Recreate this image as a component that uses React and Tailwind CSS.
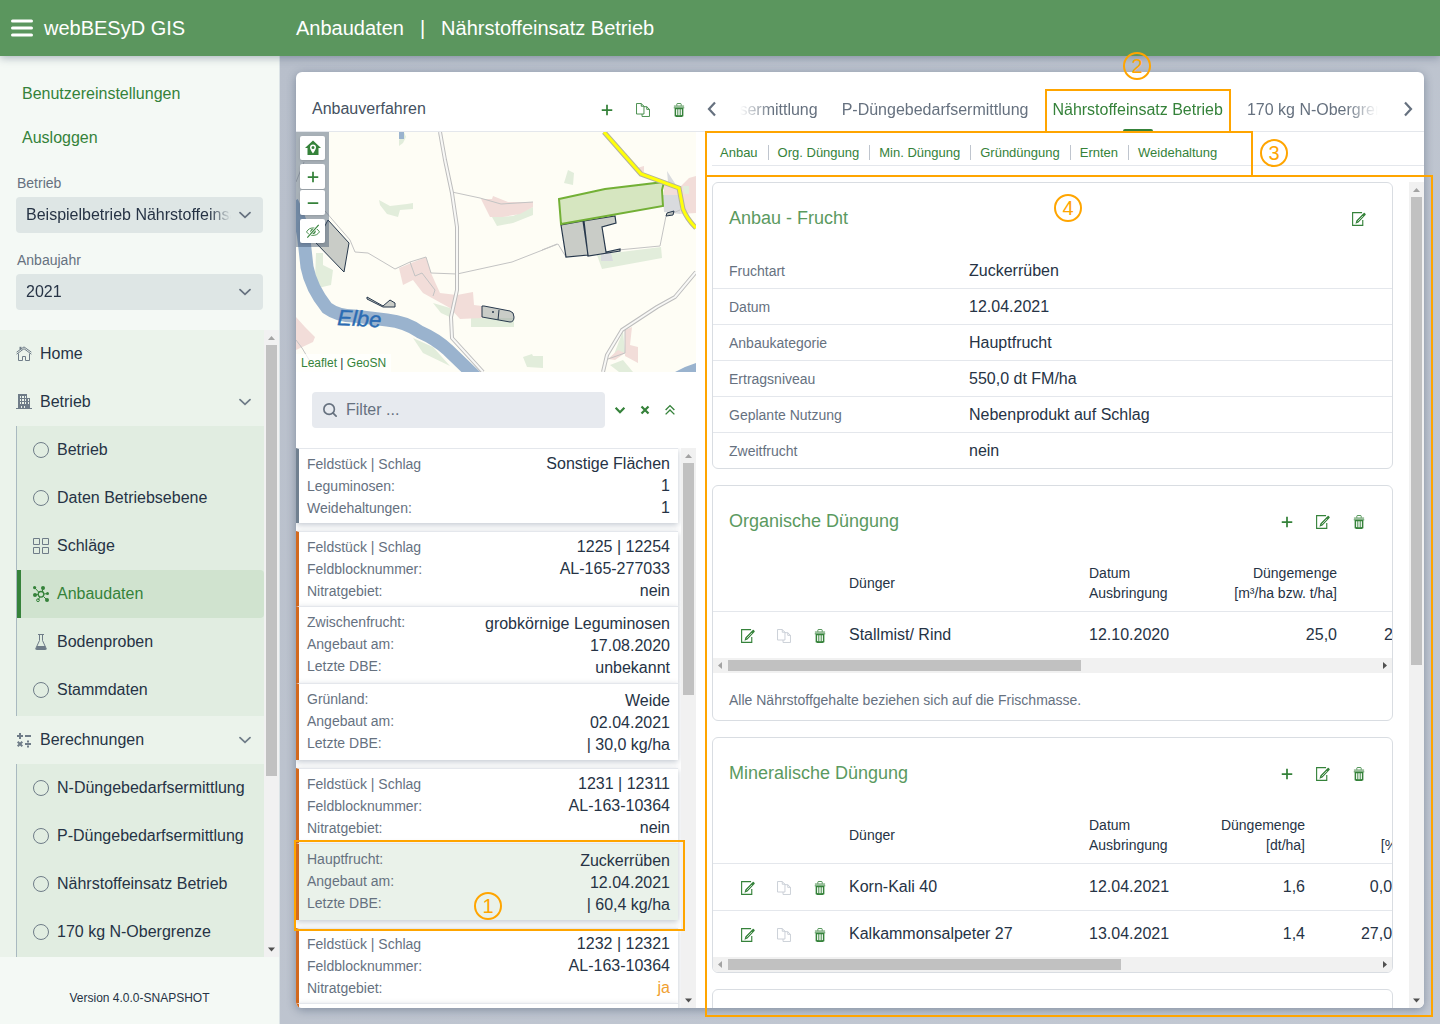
import { useEffect, useRef } from 'react'
import clsx from 'clsx'

const menu = [
  { label: 'Home', icon: 'home' },
  {
    label: 'Betrieb',
    icon: 'building',
    children: [
      { label: 'Betrieb', icon: 'circle' },
      { label: 'Daten Betriebsebene', icon: 'circle' },
      { label: 'Schläge', icon: 'grid' },
      { label: 'Anbaudaten', icon: 'cluster', active: true },
      { label: 'Bodenproben', icon: 'flask' },
      { label: 'Stammdaten', icon: 'circle' },
    ],
  },
  {
    label: 'Berechnungen',
    icon: 'calc',
    children: [
      { label: 'N-Düngebedarfsermittlung', icon: 'circle' },
      { label: 'P-Düngebedarfsermittlung', icon: 'circle' },
      { label: 'Nährstoffeinsatz Betrieb', icon: 'circle' },
      { label: '170 kg N-Obergrenze', icon: 'circle' },
    ],
  },
]

const fields = [
  {
    color: 'border-l-[#708090]',
    head: [['Feldstück | Schlag', 'Sonstige Flächen'], ['Leguminosen:', '1'], ['Weidehaltungen:', '1']],
    crops: [],
  },
  {
    color: 'border-l-[#d2691e]',
    head: [['Feldstück | Schlag', '1225 | 12254'], ['Feldblocknummer:', 'AL-165-277033'], ['Nitratgebiet:', 'nein']],
    crops: [
      { rows: [['Zwischenfrucht:', 'grobkörnige Leguminosen'], ['Angebaut am:', '17.08.2020'], ['Letzte DBE:', 'unbekannt']] },
      { rows: [['Grünland:', 'Weide'], ['Angebaut am:', '02.04.2021'], ['Letzte DBE:', '| 30,0 kg/ha']] },
    ],
  },
  {
    color: 'border-l-[#d2691e]',
    head: [['Feldstück | Schlag', '1231 | 12311'], ['Feldblocknummer:', 'AL-163-10364'], ['Nitratgebiet:', 'nein']],
    crops: [
      { selected: true, rows: [['Hauptfrucht:', 'Zuckerrüben'], ['Angebaut am:', '12.04.2021'], ['Letzte DBE:', '| 60,4 kg/ha']] },
    ],
  },
  {
    color: 'border-l-[#d2691e]',
    head: [['Feldstück | Schlag', '1232 | 12321'], ['Feldblocknummer:', 'AL-163-10364'], ['Nitratgebiet:', 'ja']],
    crops: [{ rows: [] }],
  },
]

const tabs = ['N-Düngebedarfsermittlung', 'P-Düngebedarfsermittlung', 'Nährstoffeinsatz Betrieb', '170 kg N-Obergrenze']

const anchors = ['Anbau', 'Org. Düngung', 'Min. Düngung', 'Gründüngung', 'Ernten', 'Weidehaltung']

const crop = [
  ['Fruchtart', 'Zuckerrüben'],
  ['Datum', '12.04.2021'],
  ['Anbaukategorie', 'Hauptfrucht'],
  ['Ertragsniveau', '550,0 dt FM/ha'],
  ['Geplante Nutzung', 'Nebenprodukt auf Schlag'],
  ['Zweitfrucht', 'nein'],
]

const icons = {
  home: (
    <g fill="none" stroke="currentColor">
      <path d="M.6 8.200 8 2.700l7.400 5.500M.6 6.200 8 .9l7.400 5.300" />
      <path d="M2.500 7.500v7h4v-4h3v4h4v-7" />
      <path d="M4.500 3.600V.8" strokeWidth="2" />
    </g>
  ),
  building: (
    <path
      fillRule="evenodd"
      d="M2 0h9v4h3v10h2v1H0v-1h2zM4 2v2h1V2zm2 0v2h2V2zm3 0v2h1V2zM4 5v2h1V5zm2 0v2h2V5zm3 0v2h1V5zM4 8v2h1V8zm2 0v2h2V8zm3 0v2h1V8zm-4 4v2h1v-2zm3 0v2h1v-2zm4-7v2h1V5zm0 3v2h1V8z"
    />
  ),
  circle: <circle cx="8" cy="8" r="7.500" fill="none" stroke="currentColor" />,
  grid: <path d="M.5.5h6v6h-6zm9 0h6v6h-6zm-9 9h6v6h-6zm9 0h6v6h-6z" fill="none" stroke="currentColor" />,
  cluster: (
    <g>
      <path d="m2 2 4 4.500M10.200 2.500 9 6M14.500 7.500 11 8M1.800 9l4-.600M5 14l2-3M14 14l-3.500-3.500" stroke="currentColor" />
      <circle cx="8" cy="8.300" r="2.800" fill="none" stroke="currentColor" strokeWidth="1.300" />
      <circle cx="1.600" cy="1.600" r="1.600" />
      <circle cx="10" cy="2" r="2" />
      <circle cx="14.500" cy="7.500" r="1.500" />
      <circle cx="2" cy="9" r="2" />
      <circle cx="14" cy="14" r="2" />
      <circle cx="5" cy="14.200" r="1.400" fill="none" stroke="currentColor" />
    </g>
  ),
  flask: (
    <g>
      <path d="M5 .5h6M6.500 1v5.500l-3.700 8a.7.7 0 0 0 .7 1h9a.7.700 0 0 0 .7-1l-3.700-8V1" fill="none" stroke="currentColor" />
      <path d="M4 12h8l1.500 3.500h-11z" />
    </g>
  ),
  calc: (
    <g stroke="currentColor" strokeWidth="2">
      <path d="M1 4h6M4 1v6M9 4h6M9 12h6" />
      <path d="m1.700 9.700 4.600 4.600M6.300 9.700l-4.600 4.600" />
      <path d="M12 8.500v2M12 13.500v2" />
    </g>
  ),
  plus: <path d="M14 7H9V2H7v5H2v2h5v5h2V9h5z" />,
  minus: <path d="M2 7h12v2H2z" />,
  copy: (
    <path
      d="M.6.6h5.400l3.100 3.100v8.900H.6zM6 .6v3.100h3.100M9.100 4.200h3.200l3.100 3.100v8.100H6.900v-2.800M12.300 4.200v3.100h3.100"
      fill="none"
      stroke="currentColor"
    />
  ),
  trash: (
    <g>
      <path d="M2.200 2.500h11.600v2.700H2.200z" opacity=".5" />
      <path d="M5.500 3V1.500a1 1 0 0 1 1-1h3a1 1 0 0 1 1 1V3" fill="none" stroke="currentColor" />
      <path
        fillRule="evenodd"
        d="M2 5h12v1h-1v9c-1.300.700-2.700 1-4.200 1H7.200c-1.500 0-3-.400-4.200-1V6H2zm2.700 2v6.800l1.400.1V7zm2.500 0v7h1.600V7zm2.700 0v6.900l1.400-.2V7z"
      />
    </g>
  ),
  edit: (
    <g>
      <path d="M11.500.7H.7v14.600h11.600V9" fill="none" stroke="currentColor" strokeWidth="1.300" />
      <path d="M4 13.500 5 9.800l7.800-8 .5-.5c.6-.6 1.200-.3 1.800.3s.9 1.200.3 1.800l-8 8.500z" />
      <path d="m6.500 10.700 6-6.200" stroke="white" strokeWidth=".8" />
    </g>
  ),
  search: (
    <g fill="none" stroke="currentColor" strokeWidth="1.900">
      <circle cx="7" cy="7" r="6" />
      <path d="m11.500 11.500 3.500 3.500" strokeLinecap="round" />
    </g>
  ),
  down: <path d="m3 5.500 5 5 5-5" fill="none" stroke="currentColor" strokeWidth="2.600" />,
  close: <path d="m4 4 8 8M12 4l-8 8" fill="none" stroke="currentColor" strokeWidth="2.600" />,
  doubleUp: <path d="m3 8 5-5 5 5M3 13l5-5 5 5" fill="none" stroke="currentColor" strokeWidth="1.600" />,
  chevron: <path d="m3 5.700 5 4.600 5-4.600" fill="none" stroke="currentColor" strokeWidth="1.800" strokeLinecap="round" />,
  prev: <path d="m11 1.500-6 6.500 6 6.500" fill="none" stroke="currentColor" strokeWidth="2.200" />,
  next: <path d="m5 1.500 6 6.500-6 6.500" fill="none" stroke="currentColor" strokeWidth="2.200" />,
  mapHome: (
    <path
      fillRule="evenodd"
      d="M8 .5 16 8h-2.500v7h-11V8H0zM8 4.500a3 3 0 0 0-3 3C5 9.500 8 13.500 8 13.500s3-4 3-6a3 3 0 0 0-3-3zM8 6a1.500 1.500 0 1 1 0 3 1.500 1.500 0 0 1 0-3z"
    />
  ),
  eyeSlash: (
    <g fill="none" stroke="currentColor">
      <path d="M.6 9C2.500 5.800 5 4.500 8 4.500s5.500 1.300 7.400 4.500C13.500 12 11 13 8 13S2.500 12 .6 9z" />
      <circle cx="8" cy="8.500" r="2.600" fill="currentColor" />
      <path d="M14.500 1 1.500 15.500" stroke="white" strokeWidth="3" />
      <path d="M14.500 1 1.500 15.500" strokeWidth="1.300" />
    </g>
  ),
}

const Icon = ({ name, className = 'size-4' }) => (
  <svg viewBox="0 0 16 16" fill="currentColor" aria-hidden="true" className={clsx('shrink-0', className)}>
    {icons[name]}
  </svg>
)

const IconButton = ({ name, label, disabled }) => (
  <button
    type="button"
    aria-label={label}
    disabled={disabled}
    className={clsx('size-9 pl-0.5 pt-0.5 flex items-center justify-center shrink-0', disabled ? 'text-[#c5cad2]' : 'text-[#35823a]')}
  >
    <Icon name={name} className="size-3.5" />
  </button>
)

const VerticalBar = ({ thumb }) => (
  <div className="w-[15px] shrink-0 bg-[#f1f1f1] flex flex-col">
    <svg viewBox="0 0 15 15" className="size-[15px] shrink-0" aria-hidden="true">
      <path d="M4 10 7.500 6 11 10z" fill="#a3a3a3" />
    </svg>
    <div className="flex-1">
      <div className="w-[11px] mx-auto bg-[#c1c1c1]" style={{ height: `${thumb}%` }} />
    </div>
    <svg viewBox="0 0 15 15" className="size-[15px] shrink-0" aria-hidden="true">
      <path d="M4 5.500 7.500 9.500 11 5.500z" fill="#505050" />
    </svg>
  </div>
)

const HorizontalBar = ({ thumb }) => (
  <div className="h-[15px] bg-[#f1f1f1] flex items-center">
    <svg viewBox="0 0 15 15" className="size-[15px] shrink-0" aria-hidden="true">
      <path d="M9 4 5 7.500 9 11z" fill="#a3a3a3" />
    </svg>
    <div className="flex-1">
      <div className="h-[11px] bg-[#c1c1c1]" style={{ width: `${thumb}%` }} />
    </div>
    <svg viewBox="0 0 15 15" className="size-[15px] shrink-0" aria-hidden="true">
      <path d="M6 4 10 7.500 6 11z" fill="#505050" />
    </svg>
  </div>
)

const SelectField = ({ id, label, value }) => (
  <div>
    <label htmlFor={id} className="block text-sm leading-5 mb-1 pl-px text-[#66717f]">
      {label}
    </label>
    <div className="h-9 rounded bg-[#dee6e5] flex items-center pl-2.5 pr-2.5">
      <select
        id={id}
        className="appearance-none flex-1 min-w-0 bg-transparent h-9 text-[#263345] outline-none mask-[linear-gradient(270deg,transparent_6px,#000_28px)]"
      >
        <option>{value}</option>
      </select>
      <Icon name="chevron" className="size-4 text-[#66717f] pointer-events-none" />
    </div>
  </div>
)

const MenuItem = ({ item }) => (
  <li>
    <a href="#" className="h-12 pl-4 pr-[11px] flex items-center">
      <Icon name={item.icon} className="size-4 text-[#6f7c88]" />
      <span className="ml-2 flex-1">{item.label}</span>
      {item.children && <Icon name="chevron" className="size-4 text-[#6f7c88]" />}
    </a>
    {item.children && (
      <ul className="ml-4 border-l border-[#a9b9c0] bg-[#e1ede1] pb-0.5">
        {item.children.map((child) => (
          <li key={child.label}>
            <a
              href="#"
              className={clsx(
                'h-12 flex items-center gap-2 border-l-4 pl-3 whitespace-nowrap',
                child.active ? 'bg-[#d0e3cf] border-[#35823a] text-[#35823a] rounded-r' : 'border-transparent'
              )}
            >
              <Icon name={child.icon} className={clsx('size-4', !child.active && 'text-[#6f7c88]')} />
              {child.label}
            </a>
          </li>
        ))}
      </ul>
    )}
  </li>
)

const Sidebar = () => (
  <aside className="w-[280px] shrink-0 flex flex-col bg-[#f4f9f5] border-r border-[#dbe3e6]">
    <div className="px-4 pt-4 pb-5">
      <div className="flex flex-col items-start text-[#35823a]">
        <a href="#" className="h-11 px-1.5 flex items-center">Benutzereinstellungen</a>
        <a href="#" className="h-11 px-1.5 flex items-center">Ausloggen</a>
      </div>
      <div className="pt-[13px] flex flex-col gap-[17px]">
        <SelectField id="betrieb" label="Betrieb" value="Beispielbetrieb Nährstoffeinsatz" />
        <SelectField id="anbaujahr" label="Anbaujahr" value="2021" />
      </div>
    </div>
    <div className="flex-1 min-h-0 flex bg-[#ebf3eb]">
      <nav className="flex-1 min-w-0 overflow-hidden">
        <ul>
          {menu.map((item) => (
            <MenuItem key={item.label} item={item} />
          ))}
        </ul>
      </nav>
      <VerticalBar thumb={72.2} />
    </div>
    <footer className="h-[67px] pt-8 text-xs leading-[18px] text-center">Version 4.0.0-SNAPSHOT</footer>
  </aside>
)

const MapButton = ({ name, label, className }) => (
  <button
    type="button"
    aria-label={label}
    className={clsx('w-[25px] flex items-center justify-center rounded-xs bg-white text-[#35823a] shadow pointer-events-auto', className)}
  >
    <Icon name={name} className={name === 'mapHome' ? 'size-4' : 'size-3.5'} />
  </button>
)

const FieldMap = () => (
  <div className="grid h-60 overflow-hidden">
    <svg
      viewBox="0 0 400 240"
      preserveAspectRatio="xMidYMid slice"
      className="col-start-1 row-start-1 w-full h-60 bg-[#fefdf5]"
      role="img"
      aria-label="Karte"
    >
      <g fill="#e2eddb">
        <path d="M83 68l11 6 17-2 6-1v6l-13 1-2 7-11-3-7-9z" />
        <path d="M108 0l2 5-3 6-4 3v-6z" />
        <path d="M272 38l6 3-1 12-9-2z" />
        <path d="M237 75v8l-20 8-16 3-5-9 21-1z" />
        <path d="M301 123l64-8 1 11-60 11z" />
        <path d="M20 121h7v12l10 5-2 15-13 3-3-8z" />
        <path d="M137 171l17 5 2 10-11-5z" />
        <path d="M175 186h43v9h-43z" />
        <path d="M117 206l20 9 17 19-27-13z" />
        <path d="M227 225l9-3 1 2h10v12l-16-1z" />
        <path d="M327 199l2 22-12 4z" />
        <path d="M314 233l13-5 10 12h-14z" />
      </g>
      <g fill="#f2ddd9">
        <path d="M185 67h11l1-3 15 6h25v5l-13 7-17 3h-13z" />
        <path d="M103 136l27-11 5 16 4 9 5 11 17 2 16-3 1 13 8 1v12l-22 1-10-11-27-15-10-13-10 5z" />
        <path d="M368 53l16 2 9-9 7-2v37l-16 1-16-19z" />
        <path d="M341 36l7-2v6l-6 1z" />
        <path d="M0 185l9 10 10 10-2 5-17 8z" />
        <path d="M329 198l7-3-2 18 8 2v16l-13-7zM312 227l10-9 7 3-10 7z" />
      </g>
      <path d="M387 54h6v8h-5z" fill="#e2eddb" />
      <path d="M367 63h17v19l-16-2zM371 39l9 14-8-3zM305 121h10l2 8h-12z" fill="#d9dbde" />
      <path
        d="M-4 70Q6 90 8 108T11 135Q15 156 31 176Q42 184 58 184L91 188Q110 190 124 200Q140 207 152 218L181 246"
        fill="none"
        stroke="#9ab3ce"
        strokeWidth="13"
      />
      <path d="M103 0h5v7h-5zM379 240l10-5 11-4v9z" fill="#9ab3ce" />
      <g fill="none" stroke="#c3c3c3">
        <path d="M156 60l28 6 21 6 32-2" />
        <path d="M29 79l25 29 5 12 13 1 27 16 15-7 16-5 5 16 26 1 55-12 46-18 8 13M246 118l15-6M114 130l5 14 7-3 13 17-2 6" />
        <path d="M384 78l-14 6-6 30-42 4M0 208l6 8 9 15M312 227l17-6v-23M0 50l8-20" />
      </g>
      <g fill="none" strokeLinejoin="round">
        <path d="M144 0l5 28 7 33 5 34v63l-6 27 1 21 31 34M400 140l-21 25-18 10-35 23-15 25-4 17" stroke="#bdbdbd" strokeWidth="4" />
        <path d="M144 0l5 28 7 33 5 34v63l-6 27 1 21 31 34M400 140l-21 25-18 10-35 23-15 25-4 17" stroke="#f8f8f6" strokeWidth="2" />
      </g>
      <g fill="#a5aca9" fillOpacity=".6" stroke="#27384c">
        <path d="M265 93l22-4 5 34-22 2zM288 89l31-5 1 7-14 4 4 25 14-3v2l-32 5z" strokeWidth="1.200" />
        <path d="M32 88l21 23-5 29-28-29z" />
        <path d="M71 165l16 9 7-6 5 3v4H87l-16-8zM188 174l26 5q4 1 4 6t-4 5l-28-5v-11zM203 178l-1 10M371 81l7-2-1 4-7 1z" />
      </g>
      <circle cx="197" cy="180" r="1" fill="#27384c" />
      <path d="M263 67l46-10 59-7-2 8 1 16-102 18z" fill="#cfe2b6" fillOpacity=".85" stroke="#73b036" strokeWidth="2" />
      <path d="M308 0l37 42 38 14 4 21q4 10 13 19" fill="none" stroke="#b5b49a" strokeWidth="5" />
      <path d="M308 0l37 42 38 14 4 21q4 10 13 19" fill="none" stroke="#ffff0a" strokeWidth="3" />
      <text
        x="41"
        y="193"
        fill="#2b6cb3"
        stroke="#2b6cb3"
        strokeWidth=".4"
        fontFamily="Liberation Sans, Arial, sans-serif"
        fontStyle="italic"
        fontSize="22"
        transform="rotate(3 41 193)"
      >
        Elbe
      </text>
    </svg>
    <div className="z-10 col-start-1 row-start-1 flex flex-col items-start justify-between pointer-events-none">
      <div className="flex flex-col p-1 bg-[#41546e]/45">
        <MapButton name="mapHome" label="Startansicht" className="h-6 mb-1" />
        <MapButton name="plus" label="Vergrößern" className="h-[25px] mb-px" />
        <MapButton name="minus" label="Verkleinern" className="h-[25px] mb-1" />
        <MapButton name="eyeSlash" label="Ebenen ausblenden" className="h-6" />
      </div>
      <p className="bg-white/70 px-[5px] text-xs leading-[18px]">
        <a href="#" className="text-[#35823a]">Leaflet</a> | <a href="#" className="text-[#35823a]">GeoSN</a>
      </p>
    </div>
  </div>
)

const Entry = ({ rows, color, selected, nested }) => (
  <dl
    className={clsx(
      'border-t border-t-[#e4e7ec] border-l-3 px-2 pb-1 shadow-[0_2px_6px_rgba(40,60,90,0.28)]',
      nested ? 'min-h-[77px] pt-1.5' : 'pt-1',
      selected ? 'bg-[#eaf2ea]' : 'bg-white',
      color
    )}
  >
    {rows.map(([label, value]) => (
      <div key={label} className="h-[22px] flex justify-between">
        <dt className={clsx('text-sm text-[#66717f]', nested ? 'leading-[18px]' : 'leading-[22px]')}>{label}</dt>
        <dd className={clsx('text-base leading-[22px]', value === 'ja' && 'text-[#f0a030]')}>{value}</dd>
      </div>
    ))}
  </dl>
)

const FilterButton = ({ name, label }) => (
  <button type="button" aria-label={label} className="w-[25px] h-9 flex items-center justify-center text-[#35823a]">
    <Icon name={name} className="size-3.5" />
  </button>
)

const FieldPanel = () => (
  <section className="w-[400px] shrink-0 flex flex-col">
    <header className="h-[60px] shrink-0 flex items-center pl-4 pt-3.5 border-b border-[#e4e7ec]">
      <h2 className="flex-1 text-[#45515f]">Anbauverfahren</h2>
      <IconButton name="plus" label="Neu" />
      <IconButton name="copy" label="Kopieren" />
      <IconButton name="trash" label="Löschen" />
    </header>
    <FieldMap />
    <div className="py-5 pl-4 pr-3.5 flex items-center">
      <label className="flex-1 h-9 mr-0.5 px-2.5 flex items-center gap-2 rounded bg-[#e7eaef]">
        <Icon name="search" className="size-3.5 mx-px text-[#66717f]" />
        <input
          type="text"
          aria-label="Filter"
          placeholder="Filter ..."
          className="flex-1 min-w-0 bg-transparent outline-none placeholder:text-[#66717f]"
        />
      </label>
      <FilterButton name="down" label="Aufklappen" />
      <FilterButton name="close" label="Filter leeren" />
      <FilterButton name="doubleUp" label="Alle einklappen" />
    </div>
    <div className="flex-1 min-h-0 flex">
      <div className="flex-1 min-w-0 overflow-hidden pr-[3px] flex flex-col gap-2">
        {fields.map((field) => (
          <div key={field.head[0][1]} className="shrink-0">
            <Entry rows={field.head} color={field.color} />
            {field.crops.map((c, i) => (
              <Entry key={i} rows={c.rows} color={field.color} selected={c.selected} nested />
            ))}
          </div>
        ))}
      </div>
      <VerticalBar thumb={43.8} />
    </div>
  </section>
)

const Tabs = () => {
  const scroller = useRef(null)

  useEffect(() => {
    scroller.current.scrollLeft = 110
  }, [])

  return (
    <div className="h-[60px] shrink-0 flex items-end border-b border-[#e4e7ec] text-[#66717f]">
      <button type="button" aria-label="Zurück" className="w-8 h-11 shrink-0 flex items-center justify-center">
        <Icon name="prev" />
      </button>
      <div
        ref={scroller}
        className="flex-1 min-w-0 overflow-hidden mask-[linear-gradient(90deg,transparent_12px,#000_44px,#000_calc(100%-46px),transparent_calc(100%-14px))]"
      >
        <div role="tablist" className="flex w-max">
          {tabs.map((tab) => {
            const selected = tab === 'Nährstoffeinsatz Betrieb'
            return (
              <button
                key={tab}
                type="button"
                role="tab"
                aria-selected={selected}
                className={clsx('h-11 px-3 flex flex-col items-center whitespace-nowrap', selected && 'text-[#35823a]')}
              >
                <span className="h-[42px] pt-1 flex items-center">{tab}</span>
                {selected && <span className="w-[30px] h-0.5 rounded-t bg-[#35823a]" />}
              </button>
            )
          })}
        </div>
      </div>
      <button type="button" aria-label="Weiter" className="w-8 h-11 shrink-0 flex items-center justify-center">
        <Icon name="next" />
      </button>
    </div>
  )
}

const Card = ({ title, actions, children }) => (
  <section className="shrink-0 rounded-md border border-[#d9dde2] overflow-hidden">
    <header className="h-[70px] px-4 flex items-center">
      <h3 className="flex-1 text-lg text-[#5b9a5f]">{title}</h3>
      {actions.includes('plus') && <IconButton name="plus" label="Neu" />}
      {actions.includes('edit') && <IconButton name="edit" label="Bearbeiten" />}
      {actions.includes('trash') && <IconButton name="trash" label="Löschen" />}
    </header>
    {children}
  </section>
)

const FertilizerTable = ({ amountWidth, unit, contentUnit, rows }) => (
  <div className="overflow-hidden">
    <table className="table-fixed w-[704px] border-collapse">
      <colgroup>
        <col className="w-[120px]" />
        <col className="w-[240px]" />
        <col className="w-[120px]" />
        <col className={amountWidth} />
        <col className="w-24" />
      </colgroup>
      <thead>
        <tr className="h-[55px] text-sm leading-5 border-b border-[#e4e7ec]">
          <th aria-label="Aktionen" />
          <th className="px-4 text-left font-normal">Dünger</th>
          <th className="px-4 text-left font-normal">Datum<br />Ausbringung</th>
          <th className="px-4 text-right font-normal whitespace-nowrap">Düngemenge<br />{unit}</th>
          <th className="px-4 text-right font-normal"><br />{contentUnit}</th>
        </tr>
      </thead>
      <tbody>
        {rows.map(([name, date, amount, content]) => (
          <tr key={name} className="h-[47px] border-b border-[#e4e7ec] last:border-0">
            <td className="pl-4">
              <div className="flex">
                <IconButton name="edit" label="Bearbeiten" />
                <IconButton name="copy" label="Kopieren" disabled />
                <IconButton name="trash" label="Löschen" />
              </div>
            </td>
            <td className="px-4">{name}</td>
            <td className="px-4">{date}</td>
            <td className="px-4 text-right">{amount}</td>
            <td className="px-4 text-right">{content}</td>
          </tr>
        ))}
      </tbody>
    </table>
  </div>
)

const DetailPanel = () => (
  <section className="flex-1 min-w-0 flex flex-col">
    <Tabs />
    <nav className="h-[34px] shrink-0 ml-4 pl-2 pt-2 flex items-center border-b border-[#e4e7ec] text-[13px] text-[#35823a]">
      {anchors.map((anchor, i) => (
        <div key={anchor} className="flex items-center">
          {i > 0 && <span className="w-px h-[15px] ml-2.5 mr-[9px] bg-[#bfc5ce]" />}
          <a href="#">{anchor}</a>
        </div>
      ))}
    </nav>
    <div className="flex-1 min-h-0 mt-4 ml-4 flex">
      <div className="flex-1 min-w-0 overflow-hidden flex flex-col gap-4 pr-4">
        <Card title="Anbau - Frucht" actions={['edit']}>
          <dl>
            {crop.map(([label, value]) => (
              <div key={label} className="h-9 px-4 flex items-center border-b border-[#e4e7ec] last:h-[35px] last:border-0">
                <dt className="w-60 shrink-0 text-sm text-[#66717f]">{label}</dt>
                <dd>{value}</dd>
              </div>
            ))}
          </dl>
        </Card>
        <Card title="Organische Düngung" actions={['plus', 'edit', 'trash']}>
          <FertilizerTable
            amountWidth="w-40"
            unit="[m³/ha bzw. t/ha]"
            rows={[['Stallmist/ Rind', '12.10.2020', '25,0', '25,000']]}
          />
          <HorizontalBar thumb={54.4} />
          <p className="h-[47px] px-4 pt-4 text-sm leading-[22px] text-[#66717f]">
            Alle Nährstoffgehalte beziehen sich auf die Frischmasse.
          </p>
        </Card>
        <Card title="Mineralische Düngung" actions={['plus', 'edit', 'trash']}>
          <FertilizerTable
            amountWidth="w-32"
            unit="[dt/ha]"
            contentUnit="[%]"
            rows={[
              ['Korn-Kali 40', '12.04.2021', '1,6', '0,00'],
              ['Kalkammonsalpeter 27', '13.04.2021', '1,4', '27,00'],
            ]}
          />
          <HorizontalBar thumb={60.5} />
        </Card>
        <Card title="" actions={[]} />
      </div>
      <VerticalBar thumb={58.8} />
    </div>
  </section>
)

const Marker = ({ children, className }) => (
  <span
    className={clsx(
      'absolute size-7 rounded-full border-2 border-[#ffa500] text-[#ffa500] text-xl leading-none flex items-center justify-center',
      className
    )}
  >
    {children}
  </span>
)

// numbered frames of the user guide, drawn over the running page
const Annotations = () => (
  <div className="absolute inset-0 z-30 pointer-events-none">
    <div className="absolute left-[294px] top-[840px] w-[391px] h-[91px] border-2 border-[#ffa500]" />
    <div className="absolute left-[1045px] top-[89px] w-[186px] h-[44px] border-2 border-[#ffa500]" />
    <div className="absolute left-[705px] top-[131px] w-[548px] h-[46px] border-2 border-[#ffa500]" />
    <div className="absolute left-[705px] right-[7px] top-[175px] bottom-[7px] border-2 border-[#ffa500]" />
    <Marker className="left-[474px] top-[892px]">1</Marker>
    <Marker className="left-[1123px] top-[52px]">2</Marker>
    <Marker className="left-[1260px] top-[139px]">3</Marker>
    <Marker className="left-[1054px] top-[194px]">4</Marker>
  </div>
)

const App = () => {
  return (
    <div className="relative h-screen flex flex-col font-['Liberation_Sans',Arial,sans-serif] text-base text-[#263345]">
      <header className="relative z-20 h-14 shrink-0 flex items-center bg-[#5b965e] text-white text-xl shadow-[0_2px_8px_rgba(40,60,90,0.35)]">
        <div className="w-[296px] pl-[11px] flex items-center gap-[11px]">
          <button type="button" aria-label="Menü" className="flex">
            <svg viewBox="0 0 22 18" className="w-[22px] h-[18px]" aria-hidden="true">
              <path d="M1.500 2h19M1.500 9h19M1.500 16h19" stroke="currentColor" strokeWidth="3" strokeLinecap="round" />
            </svg>
          </button>
          <span>webBESyD GIS</span>
        </div>
        <h1 className="flex gap-4">
          <span>Anbaudaten</span>
          <span>|</span>
          <span>Nährstoffeinsatz Betrieb</span>
        </h1>
      </header>
      <div className="flex-1 min-h-0 flex">
        <Sidebar />
        <main className="flex-1 min-w-0 p-4 flex bg-linear-to-br from-[#b8bfcb] to-[#c3c9d3]">
          <div className="flex-1 min-w-0 flex bg-white rounded-md overflow-hidden shadow-[0_2px_10px_rgba(40,60,90,0.4)]">
            <FieldPanel />
            <DetailPanel />
          </div>
        </main>
      </div>
      <Annotations />
    </div>
  )
}

export default App
